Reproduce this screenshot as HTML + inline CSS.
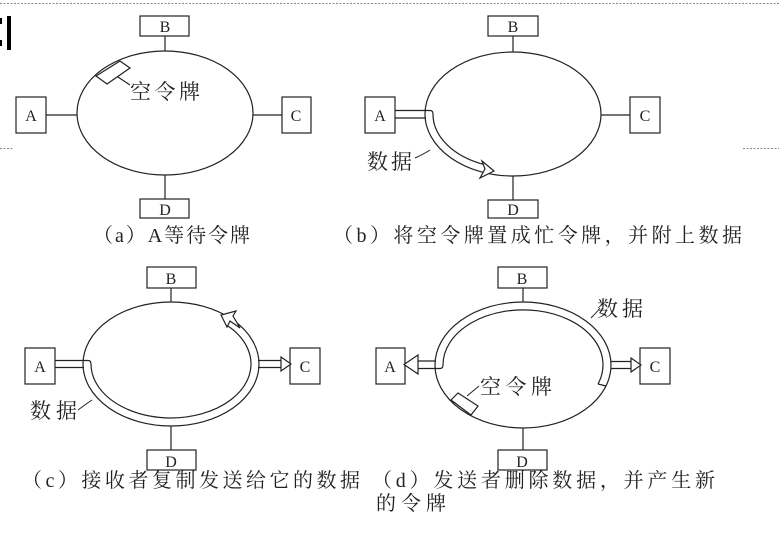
<!DOCTYPE html>
<html><head><meta charset="utf-8"><style>
html,body{margin:0;padding:0;background:#fff;}
svg{display:block}
text{font-family:"Liberation Serif","Noto Serif CJK SC",serif;fill:#222}
</style></head><body>
<svg width="779" height="549" viewBox="0 0 779 549" xmlns="http://www.w3.org/2000/svg">
<line x1="0" y1="3.5" x2="779" y2="3.5" stroke="#888" stroke-dasharray="2,1.5" stroke-width="1"/>
<line x1="0" y1="148.5" x2="14" y2="148.5" stroke="#888" stroke-dasharray="2,1.5" stroke-width="1"/>
<line x1="743" y1="148.5" x2="779" y2="148.5" stroke="#888" stroke-dasharray="2,1.5" stroke-width="1"/>
<rect x="0" y="18" width="2" height="6" fill="#000"/>
<rect x="0" y="40" width="2" height="6" fill="#000"/>
<rect x="7" y="16" width="4" height="34" fill="#000"/>

<g fill="none" stroke="#222" stroke-width="1.2">
<ellipse cx="165" cy="113" rx="88" ry="62"/>
<rect x="140" y="16" width="49" height="20"/><line x1="165" y1="36" x2="165" y2="51"/>
<rect x="16" y="97" width="30" height="36"/><line x1="46" y1="115" x2="77" y2="115"/>
<rect x="282" y="97" width="29" height="36"/><line x1="253" y1="115" x2="282" y2="115"/>
<rect x="140" y="199" width="49" height="19"/><line x1="165" y1="175" x2="165" y2="199"/>
<polygon points="96,76 107,84 130,68 120,61" fill="#fff"/>
<line x1="118" y1="77" x2="130" y2="85"/>

<ellipse cx="513" cy="114" rx="88" ry="62"/>
<rect x="488" y="16" width="50" height="20"/><line x1="513" y1="36" x2="513" y2="52"/>
<rect x="365" y="97" width="30" height="36"/>
<rect x="630" y="97" width="30" height="36"/><line x1="601" y1="115" x2="630" y2="115"/>
<rect x="488" y="200" width="50" height="18"/><line x1="513" y1="176" x2="513" y2="200"/>
<path d="M395,110.5 H430 Q433,110.5 433,114 A80,54 0 0 0 486,165"/>
<path d="M395,118 H426"/>

<ellipse cx="171" cy="364" rx="88" ry="62"/>
<rect x="147" y="267" width="49" height="21"/><line x1="171" y1="288" x2="171" y2="302"/>
<rect x="25" y="348" width="30" height="36"/>
<rect x="290" y="348" width="30" height="36"/>
<rect x="147" y="450" width="49" height="20"/><line x1="171" y1="426" x2="171" y2="450"/>
<path d="M55,360.5 H88 Q91,360.5 91,364 A80,54 0 1 0 227.6,325.8"/>
<path d="M55,367.5 H84"/>
<path d="M258,360.5 H282 M258,367.5 H282"/>

<ellipse cx="523" cy="365" rx="88" ry="63"/>
<rect x="498" y="267" width="49" height="21"/><line x1="523" y1="288" x2="523" y2="302"/>
<rect x="376" y="348" width="29" height="36"/>
<rect x="640" y="348" width="30" height="36"/>
<rect x="498" y="450" width="49" height="20"/><line x1="523" y1="428" x2="523" y2="450"/>
<path d="M598,384 A80,55 0 1 0 443,365 Q443,368.5 440,368.5 H418"/>
<path d="M598,384 L606,386"/>
<path d="M436,361 H418"/>
<path d="M611,361.5 H632 M611,368.5 H632"/>
</g>

<g fill="#fff" stroke="#222" stroke-width="1.2">
<polygon points="482,161 494,171 480,178 485,169"/>
<polygon points="221,315 227,327 230,321 240,328 233,316 236,311"/>
<polygon points="281,357 291,364 281,371"/>
<polygon points="418,355 404,364.5 418,374"/>
<polygon points="631,358 641,365 631,372"/>
<polygon points="451,400 458,393 478,406 471,415"/>
</g>
<g stroke="#222" stroke-width="1" fill="none">
<path d="M78,410 Q86,404 92,400"/>
<path d="M415,158 Q424,154 430,150"/>
<path d="M591,318 Q597,312 600,308"/>
<path d="M467,396 L479,386"/>
</g>

<g font-size="16" text-anchor="middle">
<text x="165" y="32">B</text><text x="31" y="121">A</text><text x="296" y="121">C</text><text x="165" y="215">D</text>
<text x="513" y="32">B</text><text x="380" y="121">A</text><text x="645" y="121">C</text><text x="513" y="215">D</text>
<text x="171" y="284">B</text><text x="40" y="372">A</text><text x="305" y="372">C</text><text x="171" y="467">D</text>
<text x="522" y="284">B</text><text x="390" y="372">A</text><text x="655" y="372">C</text><text x="522" y="467">D</text>
</g>
<g font-size="21">
<text x="130" y="99" textLength="70" lengthAdjust="spacing">空令牌</text>
<text x="367" y="169" textLength="45" lengthAdjust="spacing">数据</text>
<text x="30" y="418" textLength="47" lengthAdjust="spacing">数据</text>
<text x="597" y="316" textLength="46" lengthAdjust="spacing">数据</text>
<text x="480" y="394" textLength="72" lengthAdjust="spacing">空令牌</text>
</g>
<g font-size="20">
<text x="93" y="242" textLength="157" lengthAdjust="spacing">（a）A等待令牌</text>
<text x="333" y="242" textLength="409" lengthAdjust="spacing">（b）将空令牌置成忙令牌，并附上数据</text>
<text x="22" y="487" textLength="338" lengthAdjust="spacing">（c）接收者复制发送给它的数据</text>
<text x="372" y="487" textLength="343" lengthAdjust="spacing">（d）发送者删除数据，并产生新</text>
<text x="376" y="510" textLength="70" lengthAdjust="spacing">的令牌</text>
</g>
</svg>
</body></html>
